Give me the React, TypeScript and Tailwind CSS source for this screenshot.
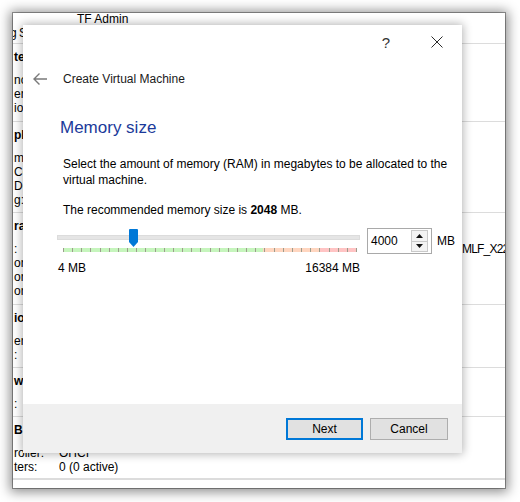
import clsx from 'clsx';

type Row = { label: string; value?: string; valueAt?: number; tight?: boolean; shift?: boolean };

interface SectionProps {
  readonly header?: string;
  readonly rows: Row[];
  readonly className: string;
}

// background details pane, mostly hidden behind the wizard
function Section({ header, rows, className }: SectionProps) {
  return (
    <div className={clsx('border-b border-[#dcdcdc]', header ? 'pt-[6px]' : '', className)}>
      {header ? <div className="h-[15px] pl-px text-[12px] font-bold leading-[15px]">{header}</div> : null}
      <div className={header ? 'mt-[8px]' : '-mt-px'}>
        {rows.map((r, i) => (
          <div key={i} className="flex h-[14px] whitespace-nowrap text-[12px] leading-[14px]">
            <span
              className={clsx('shrink-0', r.shift ? '-ml-[3px] tracking-[-0.5px]' : 'pl-px')}
              style={r.valueAt ? { width: r.valueAt } : undefined}
            >
              {r.label}
            </span>
            {r.value ? <span className={clsx('shrink-0', r.tight && 'tracking-[-0.8px]')}>{r.value}</span> : null}
          </div>
        ))}
      </div>
    </div>
  );
}

function BackArrow() {
  return (
    <svg width="14" height="12" viewBox="0 0 14 12" fill="none" stroke="#7a7a7a" strokeWidth="1.4">
      <path d="M1 6h13M6.5 0.5 1 6l5.5 5.5" />
    </svg>
  );
}

function CloseIcon() {
  return (
    <svg width="12" height="12" viewBox="0 0 12 12" fill="none" stroke="#2b2b2b" strokeWidth="1">
      <path d="M0.5 0.5l11 11M11.5 0.5l-11 11" />
    </svg>
  );
}

function Thumb() {
  return (
    <svg width="9" height="18" viewBox="0 0 9 18">
      <path d="M0 1a1 1 0 0 1 1-1h7a1 1 0 0 1 1 1v12l-4.5 5L0 13z" fill="#0078d7" />
    </svg>
  );
}

function SpinBox() {
  return (
    <div className="flex h-[26px] w-[65px] items-center border border-[#a9a9a9] bg-white pl-[3px]">
      <span className="flex-1 text-[12px]">4000</span>
      <div className="mr-[3px] flex h-[22px] w-[17px] flex-col border border-[#c9c9c9]">
        <div className="flex flex-1 items-center justify-center border-b border-[#c9c9c9] bg-[#f3f3f3]">
          <svg width="7" height="4" viewBox="0 0 7 4">
            <path d="M3.5 0 7 4H0z" fill="#111" />
          </svg>
        </div>
        <div className="flex flex-1 items-center justify-center bg-[#f3f3f3]">
          <svg width="7" height="4" viewBox="0 0 7 4">
            <path d="M0 0h7L3.5 4z" fill="#111" />
          </svg>
        </div>
      </div>
    </div>
  );
}

function MemorySlider() {
  const ticks = Array.from({ length: 33 });
  return (
    <div className="w-[303px]">
      <div className="relative h-[26px] pt-[7px]">
        <div className="h-[5px] bg-[#e5e5e5] border border-[#dcdcdc]" />
        <div className="absolute left-[72px] top-px">
          <Thumb />
        </div>
        <div className="relative ml-[6px] mt-[8px] flex h-[4px] w-[294px]">
          <div className="w-[200px] bg-[#c6f5bd]" />
          <div className="w-[57px] bg-[#ffd6c0]" />
          <div className="w-[37px] bg-[#ffc4c4]" />
          <div className="absolute inset-0 flex justify-between">
            {ticks.map((_, i) => (
              <div key={i} className="h-[4px] w-px bg-[#9c9c8c]" />
            ))}
          </div>
        </div>
      </div>
    </div>
  );
}

export default function App() {
  return (
    <div className="relative h-[502px] w-[520px] overflow-hidden bg-white pl-[13px] pt-[13px] font-['Liberation_Sans',Arial,sans-serif] text-black">
      <div className="h-[475px] w-[492px] overflow-hidden bg-white shadow-[0_0_0_1px_rgba(0,0,0,0.35),0_1px_11px_3px_rgba(0,0,0,0.45)]">
        <Section
          className="h-[32px]"
          rows={[{ label: '', value: 'TF Admin', valueAt: 64 }, { label: 'g S', shift: true }]}
        />
        <Section className="h-[78px]" header="te" rows={[{ label: 'nc' }, { label: 'er' }, { label: 'io' }]} />
        <Section
          className="h-[91px]"
          header="pla"
          rows={[{ label: 'm' }, { label: 'Co' }, { label: 'De' }, { label: 'g:' }]}
        />
        <Section
          className="h-[92px]"
          header="ra"
          rows={[
            { label: ':', value: 'MLF_X22-1.vdi', valueAt: 449, tight: true },
            { label: 'ort' },
            { label: 'ort' },
            { label: 'ort' },
          ]}
        />
        <Section className="h-[63px]" header="io" rows={[{ label: 'er' }, { label: ':' }]} />
        <Section className="h-[49px]" header="w" rows={[{ label: ':' }]} />
        <Section
          className="h-[63px] border-b-2 border-[#d2d2d2]"
          header="B"
          rows={[
            { label: 'roller:', value: 'OHCI', valueAt: 46 },
            { label: 'ters:', value: '0 (0 active)', valueAt: 46 },
          ]}
        />
      </div>

      {/* wizard dialog sits on top of the details pane */}
      <div className="absolute left-[23px] top-[25px] flex h-[428px] w-[439px] flex-col bg-white shadow-[0_0_9px_1px_rgba(0,0,0,0.3)]">
        <div className="flex h-[34px] items-center justify-end pr-[10px]">
          <span className="flex w-[30px] justify-center text-[15px] leading-none text-[#333]">?</span>
          <span className="ml-[21px] flex w-[30px] justify-center">
            <CloseIcon />
          </span>
        </div>

        <div className="mt-[10px] flex h-[20px] items-center pl-[10px]">
          <BackArrow />
          <span className="ml-[16px] text-[12px] text-[#1a1a1a]">Create Virtual Machine</span>
        </div>

        <h1 className="mt-[29px] pl-[37px] text-[17px] leading-[20px] text-[#1b3a9a]">Memory size</h1>

        <p className="mt-[18px] pl-[40px] pr-[2px] text-[12px] leading-[16px]">
          Select the amount of memory (RAM) in megabytes to be allocated to the virtual machine.
        </p>

        <p className="mt-[14px] pl-[40px] text-[12px] leading-[16px]">
          The recommended memory size is <b>2048</b> MB.
        </p>

        <div className="mt-[10px] flex items-start pl-[34px]">
          <MemorySlider />
          <div className="ml-[7px]">
            <SpinBox />
          </div>
          <span className="ml-[5px] mt-[5px] text-[12px] leading-[16px]">MB</span>
        </div>

        <div className="mt-[6px] flex w-[337px] justify-between pl-[35px] text-[12px] leading-[16px]">
          <span>4 MB</span>
          <span>16384 MB</span>
        </div>

        <div className="mt-auto flex h-[49px] justify-end gap-[7px] bg-[#f0f0f0] pr-[14px] pt-[14px]">
          <button className="h-[22px] w-[77px] border-2 border-[#0078d7] bg-[#e1e1e1] text-[12px]">Next</button>
          <button className="h-[22px] w-[78px] border border-[#adadad] bg-[#e1e1e1] text-[12px]">Cancel</button>
        </div>
      </div>
    </div>
  );
}
